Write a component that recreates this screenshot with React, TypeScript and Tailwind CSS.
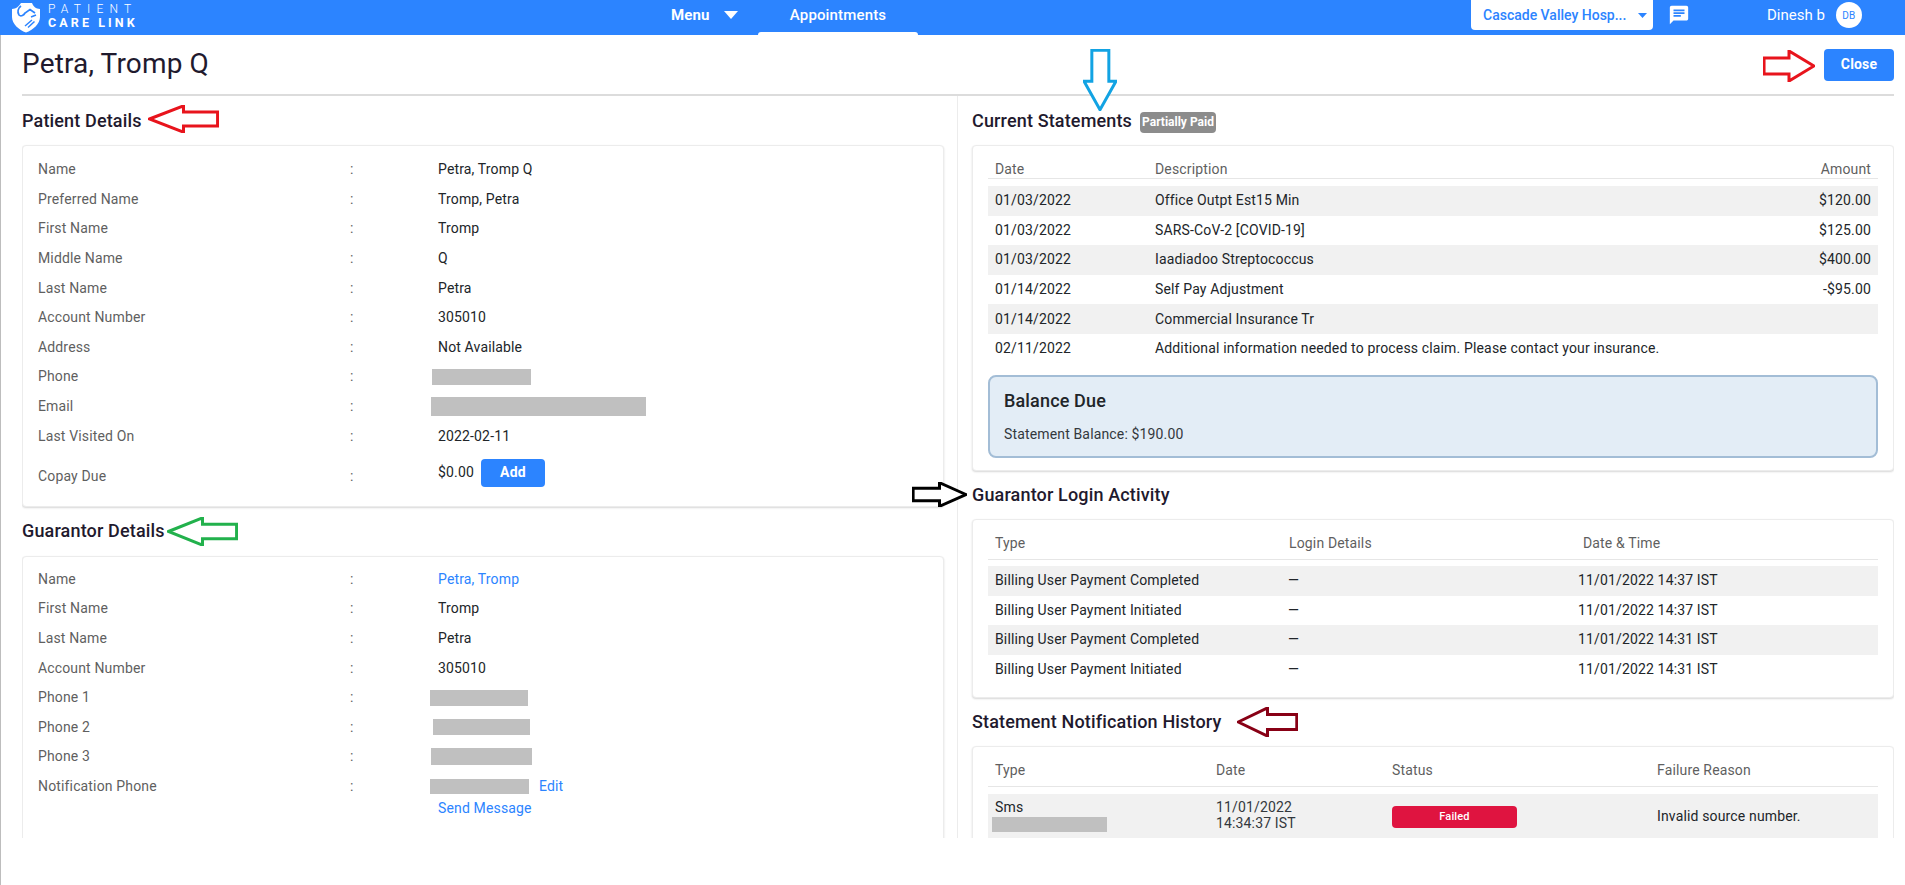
const font = { fontFamily: "Roboto, sans-serif" };

function Arrow({ cls, color, dir, sw = 3 }: { cls: string; color: string; dir: "left" | "right" | "down"; sw?: number }) {
  const pts = dir === "left" ? "2,50 50,3 50,25 98,25 98,75 50,75 50,97" : dir === "right" ? "98,50 50,3 50,25 2,25 2,75 50,75 50,97" : "50,98 3,52 26,52 26,2 76,2 76,52 97,52";
  return (
    <svg className={`absolute ${cls}`} viewBox="0 0 100 100" preserveAspectRatio="none">
      <polygon points={pts} fill="white" stroke={color} strokeWidth={sw} vectorEffect="non-scaling-stroke" />
    </svg>
  );
}

function Logo() {
  return (
    <svg width="28" height="30" viewBox="0 0 28 30">
      <path d="M0 6 C4 6 7 3 9 0 L20 0 C21 3 24 6 28 6 L28 14 C28 21 21 27 14 29.500 C7 27 0 21 0 14 Z" fill="white" />
      <path d="M9 3 C6 5 5 9 7 12 C9 14 12 12 13 10 L18 6.500 L23 10" stroke="#2c84ff" strokeWidth="1.700" fill="none" />
      <path d="M13 23 L20 17 M16 24.500 L22.500 18.500 M19 14 L24 12" stroke="#2c84ff" strokeWidth="1.500" fill="none" />
    </svg>
  );
}

function Redact({ cls }: { cls: string }) {
  return <span className={`block bg-[#c0c0c0] ${cls}`} />;
}

function Row({ label, children, h = "h-[29.6px]" }: { label?: string; children?: React.ReactNode; h?: string }) {
  return (
    <div className={`grid grid-cols-[312px_88px_1fr] items-center ${h}`}>
      <span className="text-[#5f5f5f]">{label}</span>
      <span className="text-[#5f5f5f]">{label ? ":" : ""}</span>
      <div className="text-[#212529] flex items-center relative">{children}</div>
    </div>
  );
}

function Card({ cls = "", children }: { cls?: string; children: React.ReactNode }) {
  return <div className={`bg-white border border-[#ececec] rounded-[4px] shadow-[0_1px_2px_rgba(0,0,0,0.16)] ${cls}`}>{children}</div>;
}

function Heading({ children, cls = "" }: { children: React.ReactNode; cls?: string }) {
  return <h2 className={`text-[18px] leading-[24px] font-medium text-[#1f1a2e] ${cls}`}>{children}</h2>;
}

const statements = [
  ["01/03/2022", "Office Outpt Est15 Min", "$120.00"],
  ["01/03/2022", "SARS-CoV-2 [COVID-19]", "$125.00"],
  ["01/03/2022", "Iaadiadoo Streptococcus", "$400.00"],
  ["01/14/2022", "Self Pay Adjustment", "-$95.00"],
  ["01/14/2022", "Commercial Insurance Tr", ""],
  ["02/11/2022", "Additional information needed to process claim. Please contact your insurance.", ""],
];

const logins = [
  ["Billing User Payment Completed", "—", "11/01/2022 14:37 IST"],
  ["Billing User Payment Initiated", "—", "11/01/2022 14:37 IST"],
  ["Billing User Payment Completed", "—", "11/01/2022 14:31 IST"],
  ["Billing User Payment Initiated", "—", "11/01/2022 14:31 IST"],
];

export default function App() {
  return (
    <div style={font} className="w-[1905px] h-[885px] bg-white text-[14px] tracking-[0.15px] text-[#212529] overflow-hidden relative flex flex-col">
      <header className="h-[35px] bg-[#2c84ff] flex items-center text-white shrink-0 relative">
        <div className="flex items-center pl-[12px] w-[671px]">
          <Logo />
          <div className="ml-[8px] -mt-[3px]">
            <div className="text-[12px] tracking-[6.2px] font-light leading-[13px]">PATIENT</div>
            <div className="text-[12.5px] tracking-[3.1px] font-bold leading-[13px]">CARE LINK</div>
          </div>
        </div>
        <div className="flex items-center font-bold text-[15px] w-[87px] h-full pb-[5px]">
          <span>Menu</span>
          <svg width="14" height="8" viewBox="0 0 14 8" className="ml-[14px]"><path d="M0 0h14L7 8z" fill="white" /></svg>
        </div>
        <div className="w-[160px] h-full flex justify-center items-start pt-[4px] text-[15px] font-medium relative">
          Appointments
          <span className="absolute left-0 right-0 bottom-0 h-[3px] bg-white rounded-t-[4px]" />
        </div>
        <div className="ml-[553px] w-[182px] h-[30px] -mt-[5px] bg-white rounded-b-[4px] flex items-center justify-between pl-[12px] pr-[6px] text-[#2c84ff] font-medium tracking-normal">
          <span>Cascade Valley Hosp...</span>
          <svg width="9" height="5" viewBox="0 0 9 5"><path d="M0 0h9L4.5 5z" fill="#2c84ff" /></svg>
        </div>
        <svg width="22" height="22" viewBox="0 0 24 24" className="ml-[15px] -mt-[5px]"><path d="M20 2H4c-1.100 0-2 .9-2 2v18l4-4h14c1.100 0 2-.9 2-2V4c0-1.100-.9-2-2-2zM6 9h12v2H6V9zm8 5H6v-2h8v2zm4-6H6V6h12v2z" fill="white" /></svg>
        <span className="ml-[77px] text-[15px] -mt-[5px] tracking-normal">Dinesh b</span>
        <span className="ml-[11px] w-[26px] h-[26px] -mt-[5px] rounded-full bg-white text-[#2c84ff] text-[10px] flex items-center justify-center">DB</span>
      </header>

      <main className="flex-1 border-l border-[#bdbdbd] pl-[21px] pr-[11px]">
        <div className="h-[803px] overflow-hidden">
          <div className="h-[61px] flex items-center justify-between border-b-2 border-[#dcdcdc]">
            <h1 className="text-[28px] font-normal text-[#1f1a2e] -mt-[2px]">Petra, Tromp Q</h1>
            <button className="w-[70px] h-[32px] bg-[#2c84ff] text-white rounded-[4px] font-bold">Close</button>
          </div>
          <div className="flex">
            <section className="w-[936px] border-r border-[#ececec] h-[742px] overflow-hidden">
              <div className="w-[922px]">
                <Heading cls="mt-[13px]">Patient Details</Heading>
                <Card cls="mt-[12px] pt-[9px] pl-[15px] h-[362px]">
                  <Row label="Name">Petra, Tromp Q</Row>
                  <Row label="Preferred Name">Tromp, Petra</Row>
                  <Row label="First Name">Tromp</Row>
                  <Row label="Middle Name">Q</Row>
                  <Row label="Last Name">Petra</Row>
                  <Row label="Account Number">305010</Row>
                  <Row label="Address">Not Available</Row>
                  <Row label="Phone"><Redact cls="w-[99px] h-[16px] -ml-[6px]" /></Row>
                  <Row label="Email"><Redact cls="w-[215px] h-[19px] -ml-[7px]" /></Row>
                  <Row label="Last Visited On">2022-02-11</Row>
                  <Row label="Copay Due" h="h-[52px]">
                    <span className="-mt-[8px]">$0.00</span>
                    <button className="ml-[7px] w-[64px] h-[28px] -mt-[8px] bg-[#2c84ff] text-white rounded-[4px] font-bold">Add</button>
                  </Row>
                </Card>
                <Heading cls="mt-[12px]">Guarantor Details</Heading>
                <Card cls="mt-[13px] pt-[7.5px] pl-[15px] h-[300px]">
                  <Row label="Name"><span className="text-[#2c84ff]">Petra, Tromp</span></Row>
                  <Row label="First Name">Tromp</Row>
                  <Row label="Last Name">Petra</Row>
                  <Row label="Account Number">305010</Row>
                  <Row label="Phone 1"><Redact cls="w-[98px] h-[16px] -ml-[8px]" /></Row>
                  <Row label="Phone 2"><Redact cls="w-[97px] h-[16px] -ml-[5px]" /></Row>
                  <Row label="Phone 3"><Redact cls="w-[101px] h-[17px] -ml-[7px]" /></Row>
                  <Row label="Notification Phone">
                    <Redact cls="w-[99px] h-[15px] -ml-[8px]" />
                    <span className="ml-[10px] text-[#2c84ff]">Edit</span>
                  </Row>
                  <Row><span className="text-[#2c84ff] -mt-[15px]">Send Message</span></Row>
                </Card>
              </div>
            </section>

            <section className="flex-1 pl-[14px] h-[742px] overflow-hidden">
              <div className="flex items-center mt-[13px] h-[24px]">
                <Heading>Current Statements</Heading>
                <span className="ml-[8px] mt-[2px] h-[21px] w-[76px] bg-[#8c8c8c] text-white rounded-[4px] text-[12px] tracking-normal font-bold flex items-center justify-center">Partially Paid</span>
              </div>
              <Card cls="mt-[12px] h-[326px] px-[15px] pt-[9px]">
                <div className="grid grid-cols-[160px_1fr_auto] h-[24px] items-end leading-[18px] px-[7px] border-b border-[#e6e6e6] text-[#5f5f5f]">
                  <span>Date</span><span>Description</span><span>Amount</span>
                </div>
                <div className="mt-[7px]">
                  {statements.map((r, i) => (
                    <div key={i} className={`grid grid-cols-[160px_1fr_auto] h-[29.6px] items-center px-[7px] ${i % 2 === 0 ? "bg-[#f1f1f1]" : ""}`}>
                      <span>{r[0]}</span><span>{r[1]}</span><span>{r[2]}</span>
                    </div>
                  ))}
                </div>
                <div className="mt-[11px] h-[83px] bg-[#e3edf6] border-2 border-[#a3bdd6] rounded-[8px] px-[14px] pt-[12px]">
                  <div className="text-[18px] leading-[24px] font-medium">Balance Due</div>
                  <div className="mt-[11px] leading-[20px] text-[#33383d]">Statement Balance: $190.00</div>
                </div>
              </Card>
              <Heading cls="mt-[12px]">Guarantor Login Activity</Heading>
              <Card cls="mt-[12px] h-[179px] px-[15px] pt-[8px]">
                <div className="grid grid-cols-[294px_294px_1fr] h-[32px] items-center pl-[7px] border-b border-[#e6e6e6] text-[#5f5f5f]">
                  <span>Type</span><span>Login Details</span><span>Date &amp; Time</span>
                </div>
                <div className="mt-[6px]">
                  {logins.map((r, i) => (
                    <div key={i} className={`grid grid-cols-[293px_290px_1fr] h-[29.6px] items-center pl-[7px] ${i % 2 === 0 ? "bg-[#f1f1f1]" : ""}`}>
                      <span>{r[0]}</span><span>{r[1]}</span><span>{r[2]}</span>
                    </div>
                  ))}
                </div>
              </Card>
              <Heading cls="mt-[12px]">Statement Notification History</Heading>
              <Card cls="mt-[12px] h-[200px] px-[15px] pt-[8px]">
                <div className="grid grid-cols-[221px_176px_265px_1fr] h-[32px] items-center pl-[7px] border-b border-[#e6e6e6] text-[#5f5f5f]">
                  <span>Type</span><span>Date</span><span>Status</span><span>Failure Reason</span>
                </div>
                <div className="mt-[7px] grid grid-cols-[221px_176px_265px_1fr] h-[60px] items-start pl-[7px] pt-[5px] bg-[#f1f1f1]">
                  <div className="leading-[16px]"><div>Sms</div><Redact cls="w-[115px] h-[15px] -ml-[3px] mt-[2px]" /></div>
                  <div className="leading-[16px] text-[#33383d]">11/01/2022<br />14:34:37 IST</div>
                  <div className="pt-[7px]"><span className="h-[22px] w-[125px] bg-[#df1440] text-white text-[11px] font-medium rounded-[4px] flex items-center justify-center">Failed</span></div>
                  <div className="pt-[7px]">Invalid source number.</div>
                </div>
              </Card>
            </section>
          </div>
        </div>
      </main>

      <Arrow cls="left-[148px] top-[105px] w-[71px] h-[28px]" color="#e8141c" dir="left" />
      <Arrow cls="left-[1763px] top-[50px] w-[52px] h-[32px]" color="#e8141c" dir="right" />
      <Arrow cls="left-[1083px] top-[49px] w-[34px] h-[62px]" color="#12a3e3" dir="down" />
      <Arrow cls="left-[167px] top-[517px] w-[71px] h-[29px]" color="#22b14c" dir="left" />
      <Arrow cls="left-[912px] top-[482px] w-[55px] h-[25px]" color="#000000" dir="right" />
      <Arrow cls="left-[1237px] top-[707px] w-[61px] h-[30px]" color="#880015" dir="left" />
    </div>
  );
}
